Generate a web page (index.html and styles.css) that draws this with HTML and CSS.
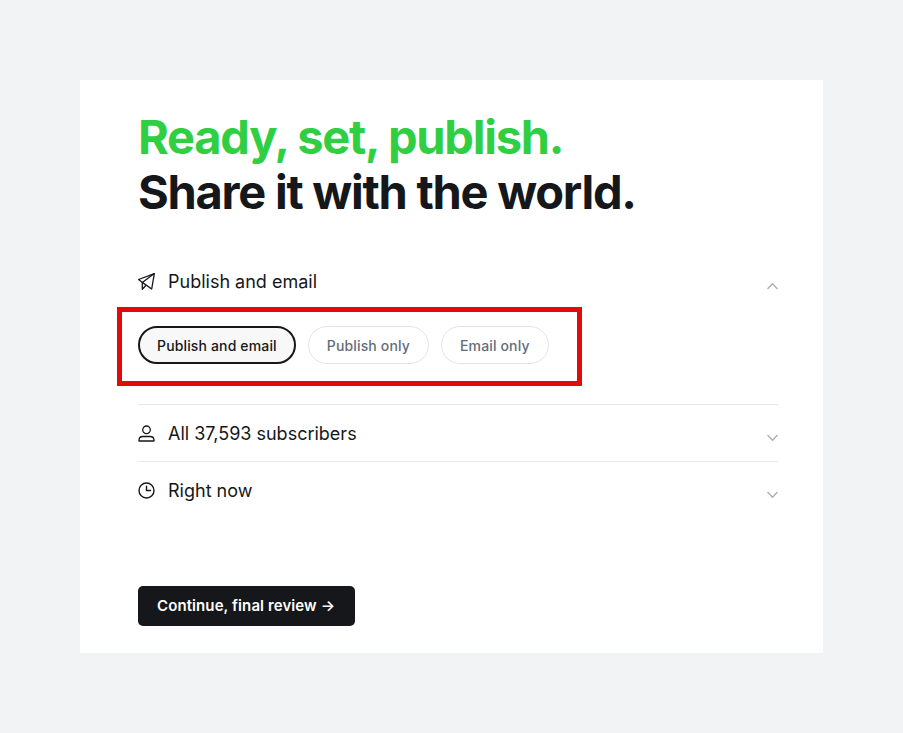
FILE: index.html

```html
<!DOCTYPE html>
<html lang="en">
<head>
    <meta charset="UTF-8">
    <title>Publish</title>
    <link rel="stylesheet" href="styles.css">
</head>
<body>
    <div class="card">
        <h1 class="title">
            <span class="title-green">Ready, set, publish.</span>
            <span>Share it with the world.</span>
        </h1>

        <div class="options">
            <div class="option option-open">
                <div class="option-head">
                    <svg class="option-icon" viewBox="0 0 17 17" fill="none" stroke="#15171a" stroke-width="1.3" stroke-linejoin="round" stroke-linecap="round">
                        <path d="M16.300.6.600 6.500l3.700 2.900L13.700 16Z"/>
                        <path d="M16.300.6 4.300 9.400v6.900l3.300-3.600"/>
                    </svg>
                    <span>Publish and email</span>
                    <svg class="chevron" viewBox="0 0 12 8" fill="none" stroke="#abb4be" stroke-width="1.6" stroke-linecap="round" stroke-linejoin="round">
                        <path d="M2 6.500 6.500 1.800l4.500 4.700"/>
                    </svg>
                </div>
                <div class="pills">
                    <button class="pill pill-active">Publish and email</button>
                    <button class="pill">Publish only</button>
                    <button class="pill">Email only</button>
                </div>
                <div class="highlight"></div>
            </div>

            <div class="option">
                <div class="option-head">
                    <svg class="option-icon" viewBox="0 0 17 17" fill="none" stroke="#15171a" stroke-width="1.3" stroke-linejoin="round">
                        <circle cx="8.500" cy="4.800" r="3.800"/>
                        <path d="M1 16v-.8c0-2.200 1.800-3.700 4-3.700h7c2.200 0 4 1.500 4 3.700v.8Z"/>
                    </svg>
                    <span>All 37,593 subscribers</span>
                    <svg class="chevron" viewBox="0 0 12 8" fill="none" stroke="#abb4be" stroke-width="1.6" stroke-linecap="round" stroke-linejoin="round">
                        <path d="M2 1.500 6.500 6.200l4.500-4.700"/>
                    </svg>
                </div>
            </div>

            <div class="option">
                <div class="option-head">
                    <svg class="option-icon" viewBox="0 0 17 17" fill="none" stroke="#15171a" stroke-width="1.4" stroke-linecap="round" stroke-linejoin="round">
                        <circle cx="8.500" cy="8.500" r="7.500"/>
                        <path d="M8.500 4.300v4.200h4"/>
                    </svg>
                    <span>Right now</span>
                    <svg class="chevron" viewBox="0 0 12 8" fill="none" stroke="#abb4be" stroke-width="1.6" stroke-linecap="round" stroke-linejoin="round">
                        <path d="M2 1.500 6.500 6.200l4.500-4.700"/>
                    </svg>
                </div>
            </div>
        </div>

        <button class="continue">Continue, final review →</button>
    </div>
</body>
</html>
```

FILE: styles.css

```css
* {
    box-sizing: border-box;
}
body {
    font-family: Inter, "Liberation Sans", sans-serif;
    background-color: #f1f3f4;
    color: #15171a;
    margin: 0;
    padding: 80px;
}
.card {
    background-color: white;
    width: 743px;
    height: 573px;
    padding: 29px 45px 0 58px;
}
.title {
    display: flex;
    flex-direction: column;
    margin: 0;
    font-size: 47px;
    line-height: 55px;
    font-weight: 700;
    letter-spacing: -1.25px;
}
.title-green {
    color: #30cf43;
}
.options {
    margin-top: 34px;
}
.option {
    position: relative;
    border-top: 1px solid #e6e9eb;
}
.option-open {
    border-top: none;
}
.option-head {
    display: flex;
    align-items: center;
    gap: 13px;
    height: 56px;
    font-size: 18px;
}
.option-icon {
    width: 17px;
    height: 17px;
    flex: none;
}
.chevron {
    width: 12px;
    height: 8px;
    margin-left: auto;
    margin-top: 9px;
}
.pills {
    display: flex;
    gap: 12px;
    margin-top: 17px;
    padding-bottom: 40px;
}
.pill {
    height: 38px;
    padding: 0 18px;
    font-family: inherit;
    font-size: 14px;
    font-weight: 500;
    letter-spacing: 0.15px;
    color: #626d79;
    background-color: white;
    border: 1px solid #e1e5e9;
    border-radius: 19px;
}
.pill-active {
    padding: 0 17px;
    color: #15171a;
    background-color: #f8f8f8;
    border: 2px solid #15171a;
}
.highlight {
    position: absolute;
    left: -21px;
    top: 54px;
    width: 465px;
    height: 79px;
    border: 5px solid #e30a0a;
}
.continue {
    display: block;
    margin-top: 68px;
    height: 40px;
    padding: 0 20px 2px 19px;
    font-family: inherit;
    font-size: 15px;
    font-weight: 600;
    letter-spacing: 0.1px;
    color: white;
    background-color: #15171a;
    border: none;
    border-radius: 5px;
}
```
